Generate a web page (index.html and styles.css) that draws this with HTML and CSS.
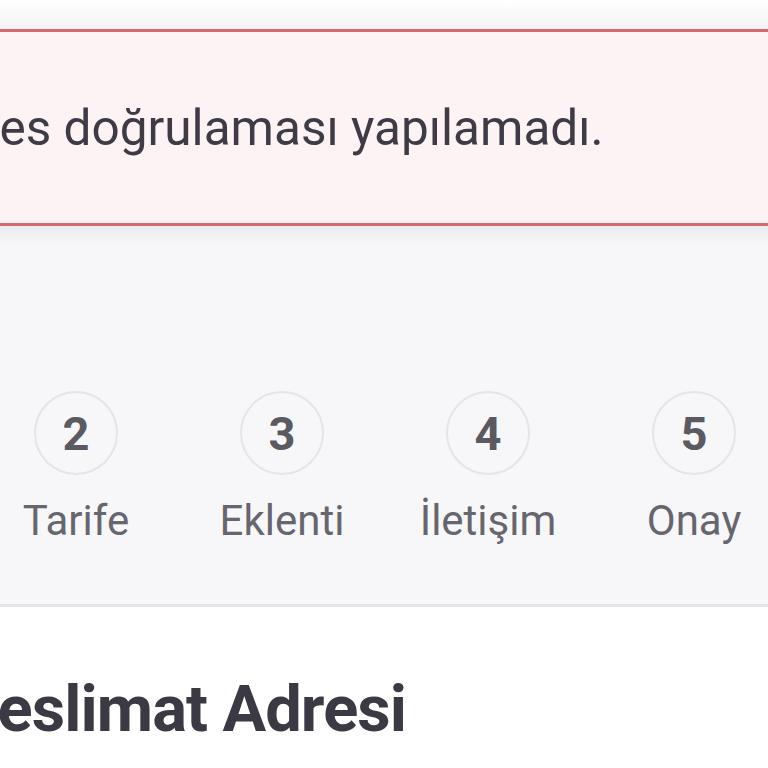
FILE: index.html
```html
<!DOCTYPE html>
<html lang="tr">
<head>
<meta charset="utf-8">
<link rel="stylesheet" href="styles.css">
</head>
<body>
<div class="viewport">
  <div class="top"></div>
  <div class="alert" role="alert">
    <p class="alert-text">Adres doğrulaması yapılamadı.</p>
  </div>
  <div class="stepper">
    <ol class="steps">
      <li class="step"><span class="num">1</span><span class="label">Adres</span></li>
      <li class="step"><span class="num">2</span><span class="label">Tarife</span></li>
      <li class="step"><span class="num">3</span><span class="label">Eklenti</span></li>
      <li class="step"><span class="num">4</span><span class="label">İletişim</span></li>
      <li class="step"><span class="num">5</span><span class="label">Onay</span></li>
    </ol>
  </div>
  <section class="content">
    <h2 class="title">Teslimat Adresi</h2>
  </section>
</div>
</body>
</html>
```
FILE: styles.css
```css
html, body {
  margin: 0;
  padding: 0;
  background: #ffffff;
}
body {
  font-family: Roboto, "Liberation Sans", sans-serif;
  width: 768px;
  height: 768px;
  overflow: hidden;
}
.viewport {
  width: 768px;
  height: 768px;
  overflow: hidden;
  display: flex;
  flex-direction: column;
  background: #f7f7fa;
}
.top {
  height: 29px;
  background: linear-gradient(#ffffff, #f4f4f6);
  flex: none;
}
.alert {
  flex: none;
  margin: 0 -40px;
  height: 191px;
  border-top: 3px solid #d6686f;
  border-bottom: 3px solid #d6686f;
  background: #fdf3f4;
  box-shadow: 0 8px 14px rgba(0, 0, 0, 0.06);
  display: flex;
  align-items: center;
  position: relative;
  z-index: 1;
}
.alert-text {
  margin: 2px 0 0 -37px;
  font-size: 49.5px;
  color: #3e3b46;
  white-space: nowrap;
  line-height: 1;
}
.stepper {
  flex: none;
  height: 381px;
  background: #f7f7fa;
  border-bottom: 3px solid #e6e6ea;
  box-sizing: border-box;
  padding-top: 165px;
}
.steps {
  list-style: none;
  margin: 0 0 0 -233px;
  padding: 0;
  display: flex;
}
.step {
  width: 206px;
  flex: none;
  display: flex;
  flex-direction: column;
  align-items: center;
}
.num {
  width: 80px;
  height: 80px;
  border: 2px solid #e5e5e9;
  border-radius: 50%;
  display: flex;
  align-items: center;
  justify-content: center;
  font-size: 47px;
  font-weight: 700;
  color: #5b5a63;
}
.label {
  margin-top: 21px;
  font-size: 42px;
  color: #67666f;
  white-space: nowrap;
  line-height: 1.2;
}
.content {
  flex: 1;
  background: #ffffff;
  padding-top: 70px;
}
.title {
  margin: 0 0 0 -39px;
  font-size: 65px;
  letter-spacing: -0.9px;
  font-weight: 700;
  color: #3a3944;
  white-space: nowrap;
  line-height: 1;
}
```
